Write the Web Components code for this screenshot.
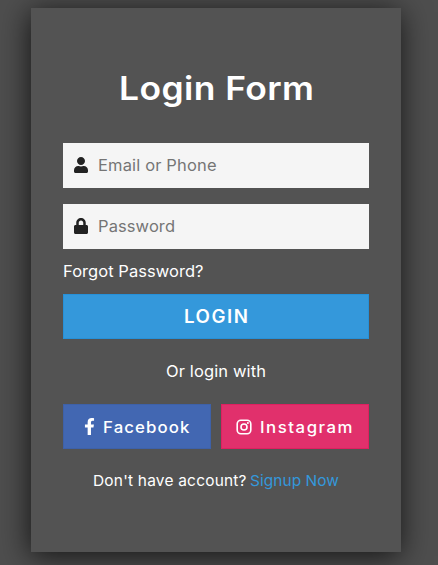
<!DOCTYPE html>
<html lang="en"><head><meta charset="utf-8"><title>Login Form</title>
<style>
html,body{margin:0;height:100%}
body{overflow:hidden;background:#4e4e4e;font-family:Inter,"Open Sans",sans-serif;color:#fff}
</style></head><body>
<login-card></login-card>
<script>
const define=(name,html,after)=>customElements.define(name,class extends HTMLElement{
  connectedCallback(){
    if(this.shadowRoot)return;
    this.attachShadow({mode:'open'}).innerHTML=html;
    if(after)after(this);
  }
});
// Widens and tracks a line of text so that it fills the given width.
define('tracked-text','<style>:host{display:inline-block;white-space:nowrap;text-align:left;transform-origin:0 50%}</style><slot></slot>',el=>{
  const want=+el.getAttribute('width'),scale=+(el.getAttribute('stretch')||1),n=el.textContent.length;
  const gap=(want/scale-el.getBoundingClientRect().width)/(n-1);
  el.style.letterSpacing=gap+'px';
  el.style.width=want+'px';
  if(scale!==1)el.style.transform=`scaleX(${scale})`;
});
define('form-field',`<style>
:host{display:flex;align-items:center;box-sizing:border-box;height:45px;background:#f5f5f5;color:#757575;font-size:16px;line-height:45px}
.icon{width:35px;height:43px;padding-bottom:2px;display:flex;align-items:center;justify-content:center;color:#222}
</style><span class="icon"><slot name="icon"></slot></span><slot></slot>`);
define('action-button',`<style>
:host{display:flex;align-items:center;justify-content:center;box-sizing:border-box;height:45px;border:1px solid var(--edge);background:var(--fill);color:#fff;cursor:pointer}
</style><slot></slot>`);
define('login-card',`<style>
:host{display:block;box-sizing:border-box;width:370px;height:544px;margin:8px 0 0 31px;padding:61px 32px 0;background:#535353;box-shadow:-1px 4px 28px 0 rgba(0,0,0,.75);text-align:center;font-size:16px}
svg{display:block;fill:currentColor;flex:none}
h1{margin:0 0 34px;height:40px;line-height:40px;font-size:32.500px;font-weight:600}
form-field+form-field{margin-top:16px}
.forgot{height:45px;line-height:45px;text-align:left}
.or{height:65px;line-height:65px}
.links{display:grid;grid-template-columns:148px 148px;gap:10px}
.links action-button{font-size:16px;font-weight:500;justify-content:flex-start}
.sign{height:64px;line-height:64px;font-size:15px}
a{color:#3498db}
.login{--fill:#3498db;--edge:#2691d9;font-size:18px;font-weight:600}
.fb{--fill:#4267b2;--edge:#3e61a8;padding-left:20px}
.ig{--fill:#e1306c;--edge:#df2060;padding-left:14px}
.fb svg,.ig svg{margin-right:8px}
</style>
<h1><tracked-text width="195" stretch="1.090">Login Form</tracked-text></h1>
<form-field><svg slot="icon" width="14" height="16" viewBox="0 0 448 512"><path d="M224 256c70.7 0 128-57.300 128-128S294.700 0 224 0 96 57.300 96 128s57.300 128 128 128zm89.600 32h-16.700c-22.200 10.200-46.900 16-72.900 16s-50.600-5.800-72.900-16h-16.700C60.200 288 0 348.200 0 422.400V464c0 26.500 21.500 48 48 48h352c26.500 0 48-21.500 48-48v-41.600c0-74.200-60.200-134.400-134.400-134.400z"/></svg><tracked-text width="118.500" stretch="1.030">Email or Phone</tracked-text></form-field>
<form-field><svg slot="icon" width="14" height="16" viewBox="0 0 448 512"><path d="M400 224h-24v-72C376 68.200 307.800 0 224 0S72 68.200 72 152v72H48c-26.500 0-48 21.500-48 48v192c0 26.500 21.500 48 48 48h352c26.500 0 48-21.500 48-48V272c0-26.500-21.500-48-48-48zm-104 0H152v-72c0-39.700 32.300-72 72-72s72 32.300 72 72v72z"/></svg><tracked-text width="77" stretch="1.030">Password</tracked-text></form-field>
<div class="forgot"><tracked-text width="140.500" stretch="1.030">Forgot Password?</tracked-text></div>
<action-button class="login"><tracked-text width="64" stretch="1.040">LOGIN</tracked-text></action-button>
<div class="or"><tracked-text width="100" stretch="1.030">Or login with</tracked-text></div>
<div class="links">
<action-button class="fb"><svg width="11" height="17" viewBox="0 0 320 512"><path d="M279.140 288l14.220-92.660h-88.910v-60.130c0-25.350 12.420-50.060 52.240-50.060h40.420V6.260S260.430 0 225.360 0c-73.220 0-121.080 44.380-121.080 124.720v70.620H22.890V288h81.390v224h100.170V288z"/></svg><tracked-text width="86.500" stretch="1.050">Facebook</tracked-text></action-button>
<action-button class="ig"><svg width="16" height="16" viewBox="0 0 16 16"><rect x="1.200" y="1.200" width="13.600" height="13.600" rx="3.700" fill="none" stroke="currentColor" stroke-width="1.600"/><circle cx="8" cy="8" r="3" fill="none" stroke="currentColor" stroke-width="1.600"/><circle cx="11.900" cy="4.100" r="1"/></svg><tracked-text width="92.500" stretch="1.050">Instagram</tracked-text></action-button>
</div>
<div class="sign"><tracked-text width="153.500" stretch="1.030">Don't have account?</tracked-text> <a><tracked-text width="89" stretch="1.030">Signup Now</tracked-text></a></div>`);
</script></body></html>
